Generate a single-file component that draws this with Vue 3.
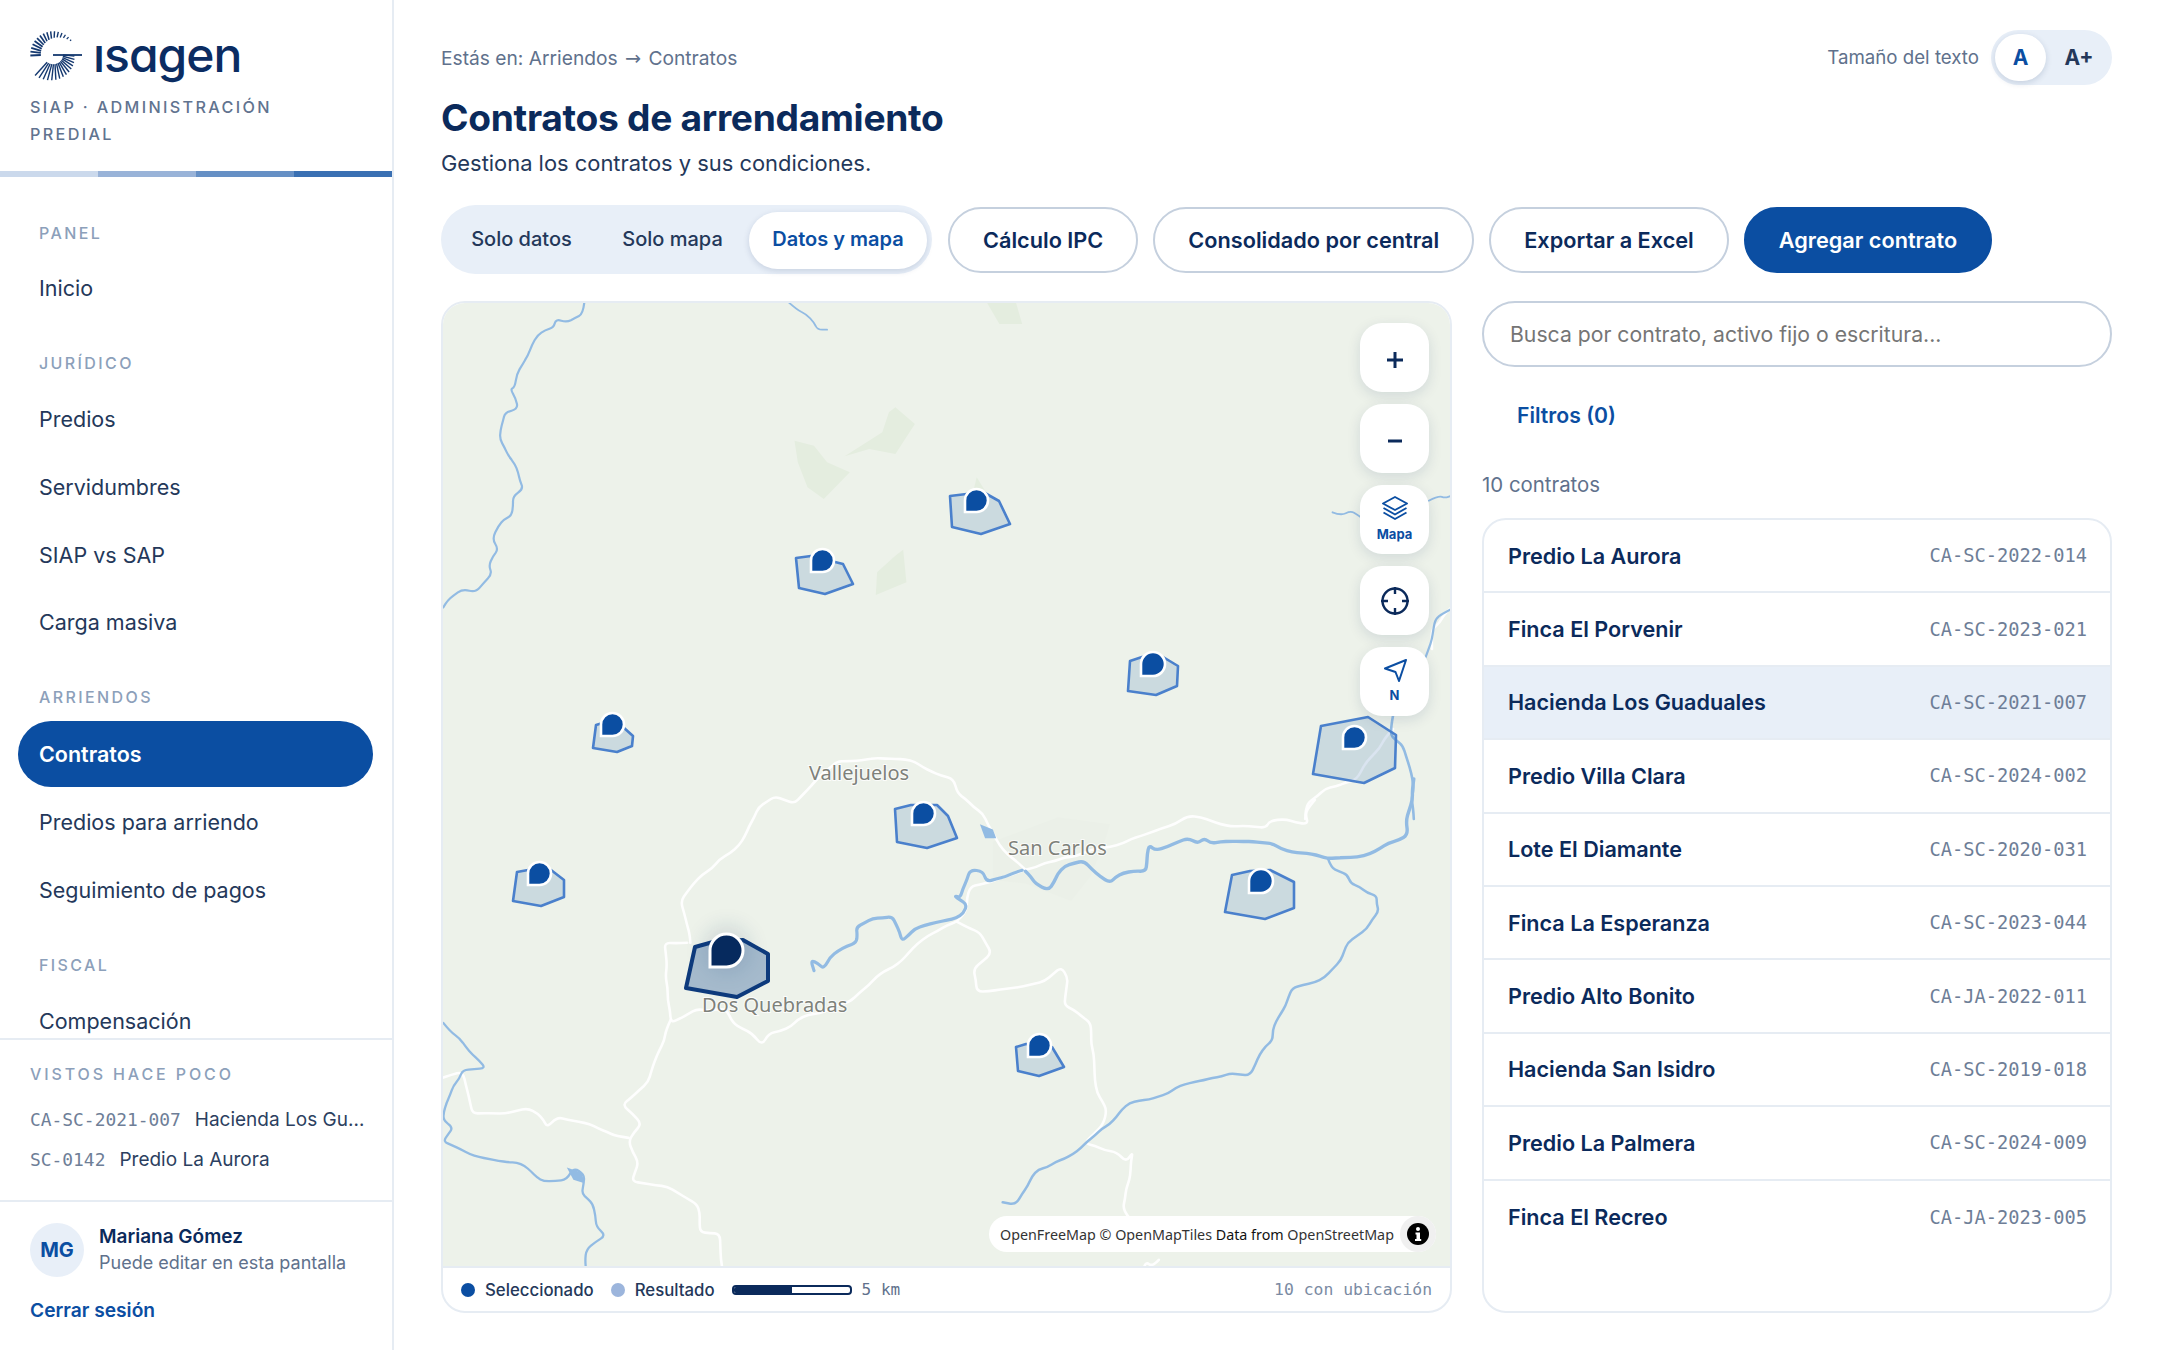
<script setup>
const SX = 1568 / 1020
const z5 = (p) => p.map(([x, y]) => [x / SX + 440, y / 3 + 300])
const z6 = (p) => p.map(([x, y]) => [x / SX + 440, y / 2.87 + 780])
const f = (n) => n.toFixed(1)
function rough(p, amp = 1.8, step = 11) {
  const out = [p[0]]
  for (let i = 0; i < p.length - 1; i++) {
    const [ax, ay] = p[i]
    const [bx, by] = p[i + 1]
    const L = Math.hypot(bx - ax, by - ay) || 1
    const n = Math.max(1, Math.round(L / step))
    for (let j = 1; j <= n; j++) {
      const t = j / n
      const r = Math.sin((i + 1) * 12.9898 + j * 78.233) * 43758.5453
      const o = j === n ? 0 : ((r - Math.floor(r)) * 2 - 1) * amp
      out.push([ax + (bx - ax) * t - ((by - ay) / L) * o, ay + (by - ay) * t + ((bx - ax) / L) * o])
    }
  }
  return out
}
function smooth(p) {
  let d = `M${f(p[0][0])} ${f(p[0][1])}`
  for (let i = 1; i < p.length - 1; i++) {
    const mx = (p[i][0] + p[i + 1][0]) / 2
    const my = (p[i][1] + p[i + 1][1]) / 2
    d += `Q${f(p[i][0])} ${f(p[i][1])} ${f(mx)} ${f(my)}`
  }
  const l = p[p.length - 1]
  return d + `L${f(l[0])} ${f(l[1])}`
}
const poly = (p) => p.map((q) => q.map(f).join(',')).join(' ')

const rivers = [
  { w: 2.2, d: z5([[222,8],[220,45],[195,70],[178,60],[175,85],[150,108],[135,170],[118,225],[115,265],[108,270],[120,330],[100,340],[92,420],[105,470],[115,495],[128,570],[112,592],[110,650],[90,680],[80,720],[90,750],[75,800],[80,825],[55,880],[35,870],[20,890],[5,925]]) },
  { w: 1.8, d: z5([[535,8],[575,70],[580,92],[595,92]]) },
  { w: 1.8, d: z5([[1372,640],[1385,650],[1400,635],[1420,660]]) },
  { w: 1.8, d: z5([[1520,605],[1535,590],[1545,597],[1555,590]]) },
  { w: 2.2, d: z5([[1555,930],[1530,960],[1525,1020],[1515,1075]]) },
  { w: 2.6, d: z5([[1465,1250],[1462,1310],[1480,1340],[1495,1440],[1497,1560]]) },
  { w: 3.4, d: z6([[1497,0],[1495,60],[1485,120],[1488,160],[1430,215],[1410,225],[1390,225],[1365,228],[1340,215],[1310,210],[1280,185],[1200,180],[1185,185],[1175,170],[1165,185],[1150,170],[1135,180],[1100,205],[1090,190],[1085,265],[1050,270],[1030,298],[990,235],[960,250],[935,320],[915,300],[900,265]]) },
  { w: 3.2, d: z6([[895,262],[870,280],[840,295],[835,265],[815,260],[810,290],[800,340],[790,335],[810,360],[805,385],[780,405],[745,420],[730,430],[710,465],[695,395],[665,400],[640,425],[640,470],[600,510],[590,545],[570,520],[575,550]]) },
  { w: 2.5, d: z6([[1365,228],[1370,255],[1395,275],[1400,300],[1440,335],[1443,380],[1425,430],[1395,470],[1385,520],[1360,570],[1310,600],[1300,650],[1280,720],[1280,750],[1260,790],[1245,850],[1215,845],[1160,870],[1090,920],[1060,930],[1030,990],[995,1040],[960,1090],[920,1120],[895,1190],[885,1222],[865,1215]]) },
  { w: 2.3, d: z6([[5,700],[40,770],[70,830],[35,835],[10,930],[5,980],[20,1000],[5,1040],[60,1085],[105,1100],[130,1110],[160,1155],[195,1150],[205,1115],[222,1135],[218,1190],[235,1220],[240,1285],[255,1310],[225,1350],[225,1415]]) },
]
const roads = [
  z5([[1555,925],[1525,990],[1525,1050]]),
  z5([[1465,1290],[1420,1400],[1410,1440],[1360,1470],[1335,1510],[1330,1560]]),
  z6([[1345,60],[1330,100],[1335,130],[1315,125],[1300,115],[1275,120],[1270,140],[1200,130],[1170,110],[1150,105],[1130,130],[1090,155],[1050,185],[1030,195],[960,225],[900,260],[860,285],[815,310],[810,375],[795,410],[750,450],[720,500],[660,590],[630,640],[600,660],[550,690],[540,710],[505,730],[495,765],[480,730],[450,700],[440,660],[395,660],[355,700],[350,600],[345,470],[380,470]]),
  z6([[355,690],[330,810],[320,870],[280,935],[310,990],[290,1040],[305,1100],[295,1155],[350,1170],[395,1220],[400,1300],[430,1305],[435,1415]]),
  z6([[290,1030],[270,1025],[230,990],[180,970],[165,1000],[150,960],[135,945],[100,960],[50,960],[40,880],[35,840],[0,860]]),
  z6([[385,470],[380,420],[370,350],[390,300],[430,230],[460,190],[490,80],[515,50],[545,70],[575,10],[585,-10],[610,-50],[670,-60],[730,-50],[770,-10],[790,0],[795,40],[820,80],[835,100],[860,190],[900,260]]),
  z6([[795,410],[830,440],[848,500],[820,545],[825,610],[880,600],[930,580],[955,540],[965,570],[960,650],[1000,700],[1005,790],[1010,900],[1025,950],[1020,990],[990,1045],[1040,1070],[1055,1100],[1065,1070],[1060,1150],[1050,1230],[1065,1270]]),
  z6([[1105,1380],[1095,1400],[1085,1385],[1080,1415]]),
].map((p) => smooth(rough(p)))
const riversD = rivers.map((r) => ({ w: r.w, d: smooth(rough(r.d, 1.7, 10)) }))

const greens = [
  z5([[840,8],[885,8],[895,75],[860,75]]),
  z5([[545,425],[575,440],[595,490],[630,520],[590,600],[565,565],[550,490]]),
  z5([[700,325],[730,375],[700,465],[660,450],[622,472],[680,400],[690,340]]),
  z5([[712,752],[717,850],[670,888],[672,820],[700,770]]),
  z5([[825,535],[838,575],[820,575]]),
].map(poly)
const town = poly(z6([[850,180],[950,110],[1030,130],[1020,190],[1000,280],[970,350],[900,300],[850,290]]))
const lake = poly(z6([[830,130],[850,145],[855,170],[838,170]]))
const lake2 = poly(z6([[195,1115],[218,1130],[222,1160],[205,1150]]))

const pin = (x, y, s) => `M${x} ${y + s}V${y + s / 2}A${s / 2} ${s / 2} 0 1 1 ${x + s / 2} ${y + s}Z`
const shift = (pts, dx) => pts.map(([x, y]) => [x + dx, y])
const markers = [
  { pts: shift([[953,497],[986,493],[1002,502],[1013,525],[984,535],[955,528]], -3), x: 965, y: 490, s: 23 },
  { pts: shift([[798,559],[813,557],[845,565],[855,585],[827,595],[801,589]], -2), x: 811, y: 550, s: 23 },
  { pts: shift([[1133,662],[1145,658],[1166,658],[1181,667],[1180,687],[1159,696],[1131,692]], -3), x: 1141, y: 653, s: 24 },
  { pts: shift([[597,726],[607,723],[624,728],[634,737],[633,747],[618,753],[594,749]], -1), x: 601, y: 714, s: 23 },
  { pts: [[1321,727],[1368,718],[1396,736],[1395,769],[1364,784],[1313,775]], x: 1343, y: 727, s: 23 },
  { pts: shift([[898,810],[914,806],[940,806],[951,817],[960,839],[930,849],[900,843]], -3), x: 912, y: 803, s: 23 },
  { pts: [[517,873],[528,871],[551,871],[564,881],[564,898],[541,907],[513,902]], x: 528, y: 863, s: 23 },
  { pts: shift([[1236,876],[1254,872],[1274,871],[1298,883],[1298,909],[1269,920],[1229,913]], -4), x: 1249, y: 870, s: 24 },
  { pts: shift([[1019,1048],[1029,1045],[1055,1048],[1067,1068],[1042,1077],[1021,1072]], -3), x: 1028, y: 1035, s: 23 },
].map((m) => ({ points: poly(m.pts), pin: pin(m.x, m.y, m.s) }))
const selected = { points: poly([[695,948],[713,943],[743,941],[768,955],[768,982],[737,998],[686,989]]), pin: pin(710, 935, 33) }

const rad = (a) => (a * Math.PI) / 180
const raysUp = Array.from({ length: 16 }, (_, i) => {
  const a = rad(183 - i * 9.6)
  const k = i / 15
  const ro = 23
  const ri = 12.5 + k * k * 9
  return { x1: 25.3 + ri * Math.cos(a), y1: 25.3 - ri * Math.sin(a), x2: 25.3 + ro * Math.cos(a), y2: 25.3 - ro * Math.sin(a), w: 1.9 - k * 0.7 }
})
const raysDown = Array.from({ length: 15 }, (_, i) => {
  const a = rad(228 + i * 9)
  const k = i / 14
  const ri = 11 - k * 2.5
  const ro = 29 - k * 9
  return { x1: 26.5 + ri * Math.cos(a), y1: 25 - ri * Math.sin(a), x2: 26.5 + ro * Math.cos(a), y2: 25 - ro * Math.sin(a), w: 1.4 }
})

const nav = [
  { label: 'PANEL', items: ['Inicio'] },
  { label: 'JURÍDICO', items: ['Predios', 'Servidumbres', 'SIAP vs SAP', 'Carga masiva'] },
  { label: 'ARRIENDOS', items: ['Contratos', 'Predios para arriendo', 'Seguimiento de pagos'] },
  { label: 'FISCAL', items: ['Compensación'] },
]
const recent = [
  { code: 'CA-SC-2021-007', name: 'Hacienda Los Guaduales' },
  { code: 'SC-0142', name: 'Predio La Aurora' },
]
const contracts = [
  ['Predio La Aurora', 'CA-SC-2022-014'],
  ['Finca El Porvenir', 'CA-SC-2023-021'],
  ['Hacienda Los Guaduales', 'CA-SC-2021-007'],
  ['Predio Villa Clara', 'CA-SC-2024-002'],
  ['Lote El Diamante', 'CA-SC-2020-031'],
  ['Finca La Esperanza', 'CA-SC-2023-044'],
  ['Predio Alto Bonito', 'CA-JA-2022-011'],
  ['Hacienda San Isidro', 'CA-SC-2019-018'],
  ['Predio La Palmera', 'CA-SC-2024-009'],
  ['Finca El Recreo', 'CA-JA-2023-005'],
]
</script>

<template>
  <div class="app">
    <aside class="side">
      <div class="brand">
        <div class="logo">
          <svg width="56" height="56" viewBox="0 0 56 56" class="logo-mark">
            <g stroke="#14386f" stroke-linecap="butt">
              <line v-for="(r, i) in raysUp" :key="'u' + i" :x1="r.x1" :y1="r.y1" :x2="r.x2" :y2="r.y2" :stroke-width="r.w" />
              <line v-for="(r, i) in raysDown" :key="'d' + i" :x1="r.x1" :y1="r.y1" :x2="r.x2" :y2="r.y2" :stroke-width="r.w" />
              <line x1="25" y1="26" x2="54" y2="26" stroke-width="1.8" />
            </g>
          </svg>
          <span class="logo-text">ısagen</span>
        </div>
        <p class="brand-sub">SIAP · ADMINISTRACIÓN PREDIAL</p>
      </div>
      <div class="stripe"><i></i><i></i><i></i><i></i></div>
      <nav class="nav">
        <section v-for="s in nav" :key="s.label" class="nav-sec">
          <h3>{{ s.label }}</h3>
          <a v-for="it in s.items" :key="it" class="nav-item" :class="{ active: it === 'Contratos' }">{{ it }}</a>
        </section>
      </nav>
      <div class="recent">
        <h4>VISTOS HACE POCO</h4>
        <div v-for="r in recent" :key="r.code" class="recent-row">
          <span class="mono">{{ r.code }}</span>
          <span class="recent-name">{{ r.name }}</span>
        </div>
      </div>
      <div class="user">
        <div class="user-top">
          <div class="avatar">MG</div>
          <div>
            <div class="user-name">Mariana Gómez</div>
            <div class="user-role">Puede editar en esta pantalla</div>
          </div>
        </div>
        <a class="logout">Cerrar sesión</a>
      </div>
    </aside>

    <main class="main">
      <header class="top">
        <div class="crumb">Estás en: Arriendos <span class="arrow">→</span> Contratos</div>
        <div class="textsize">
          <span>Tamaño del texto</span>
          <div class="ts-seg">
            <b class="on">A</b>
            <b>A+</b>
          </div>
        </div>
      </header>
      <h1>Contratos de arrendamiento</h1>
      <p class="lead">Gestiona los contratos y sus condiciones.</p>

      <div class="tools">
        <div class="seg">
          <button>Solo datos</button>
          <button>Solo mapa</button>
          <button class="on">Datos y mapa</button>
        </div>
        <button class="btn">Cálculo IPC</button>
        <button class="btn">Consolidado por central</button>
        <button class="btn">Exportar a Excel</button>
        <button class="btn primary">Agregar contrato</button>
      </div>

      <div class="work">
        <div class="mapcard">
          <div class="map">
            <svg class="mapsvg" width="1011" height="966" viewBox="441 302 1011 966">
              <defs>
                <filter id="glow" x="-60%" y="-60%" width="220%" height="220%">
                  <feGaussianBlur stdDeviation="10" />
                </filter>
              </defs>
              <polygon :points="town" fill="#ebf0e8" />
              <polygon v-for="(g, i) in greens" :key="i" :points="g" fill="#e4eddf" />
              <path v-for="(d, i) in roads" :key="'r' + i" :d="d" fill="none" stroke="#fff" stroke-opacity="0.92" stroke-width="2.6" stroke-linejoin="round" stroke-linecap="round" />
              <path v-for="(r, i) in riversD" :key="'b' + i" :d="r.d" fill="none" stroke="#92bbe3" :stroke-width="r.w" stroke-linejoin="round" stroke-linecap="round" />
              <polygon :points="lake" fill="#92bbe3" />
              <polygon :points="lake2" fill="#92bbe3" />
              <g class="places">
                <text x="809" y="781">Vallejuelos</text>
                <text x="1008" y="856">San Carlos</text>
                <text x="702" y="1013">Dos Quebradas</text>
              </g>
              <g v-for="(m, i) in markers" :key="'m' + i">
                <polygon :points="m.points" fill="#0b4ea2" fill-opacity="0.15" stroke="#4a80cc" stroke-width="2.6" stroke-linejoin="round" />
                <path :d="m.pin" fill="#0b4ea2" stroke="#fff" stroke-width="2.6" />
              </g>
              <circle cx="727" cy="950" r="24" fill="#0b2a5b" opacity="0.12" filter="url(#glow)" />
              <polygon :points="selected.points" fill="#134a8e" fill-opacity="0.33" stroke="#0d3a7c" stroke-width="4" stroke-linejoin="round" />
              <path :d="selected.pin" fill="#062a5e" stroke="#fff" stroke-width="3" />
            </svg>
            <div class="ctrls">
              <div class="ctrl pad">
                <svg width="20" height="20" viewBox="0 0 20 20"><path d="M10 2v16M2 10h16" stroke="#0b2a5b" stroke-width="3" /></svg>
              </div>
              <div class="ctrl pad">
                <svg width="20" height="20" viewBox="0 0 20 20"><path d="M3 10h14" stroke="#0b2a5b" stroke-width="3" /></svg>
              </div>
              <div class="ctrl labelled">
                <svg width="26" height="26" viewBox="0 0 26 26" fill="none" stroke="#0b4ea2" stroke-width="1.9" stroke-linejoin="round"><path d="M13 2 25 8.5 13 15 1 8.5Z" /><path d="M1.5 13 13 19.5 24.5 13" /><path d="M1.5 17.5 13 24 24.5 17.5" /></svg>
                <span>Mapa</span>
              </div>
              <div class="ctrl">
                <svg width="30" height="30" viewBox="0 0 30 30" fill="none" stroke="#0b2a5b" stroke-width="2.4"><circle cx="15" cy="15" r="12.5" /><path d="M15 1v7M15 22v7M1 15h7M22 15h7" /></svg>
              </div>
              <div class="ctrl labelled">
                <svg width="24" height="24" viewBox="0 0 24 24" fill="none" stroke="#0b4ea2" stroke-width="2" stroke-linejoin="round"><path d="M23 2 2 10.5l10.5 3.5 3.5 9Z" /></svg>
                <span>N</span>
              </div>
            </div>
            <div class="attrib">
              <span class="attrib-t">OpenFreeMap © OpenMapTiles <em>Data from</em> OpenStreetMap</span>
              <span class="attrib-i">
                <svg width="24" height="24" viewBox="0 0 24 24"><circle cx="12" cy="12" r="11" fill="#000" /><circle cx="12" cy="7" r="2" fill="#fff" /><path d="M9.5 10.5H14V17h1.2v2H9v-2h1.5v-4.5h-1Z" fill="#fff" /></svg>
              </span>
            </div>
          </div>
          <div class="legend">
            <span class="dot sel"></span><span class="lg">Seleccionado</span>
            <span class="dot res"></span><span class="lg">Resultado</span>
            <span class="scale"><i></i></span>
            <span class="mono km">5 km</span>
            <span class="mono count">10 con ubicación</span>
          </div>
        </div>

        <div class="panel">
          <input class="search" type="text" placeholder="Busca por contrato, activo fijo o escritura..." />
          <a class="filters">Filtros (0)</a>
          <div class="total">10 contratos</div>
          <div class="list">
            <div v-for="c in contracts" :key="c[1]" class="row" :class="{ sel: c[1] === 'CA-SC-2021-007' }">
              <span class="row-name">{{ c[0] }}</span>
              <span class="mono row-code">{{ c[1] }}</span>
            </div>
          </div>
        </div>
      </div>
    </main>
  </div>
</template>

<style>
html, body { margin: 0; height: 100%; overflow: hidden; background: #fff; }
</style>

<style scoped>
* { box-sizing: border-box; }
.app {
  display: flex;
  width: 2160px;
  height: 1350px;
  font-family: Inter, "Noto Sans", sans-serif;
  color: #0b2a5b;
  background: #fff;
  overflow: hidden;
}
.mono { font-family: "DejaVu Sans Mono", monospace; }

/* sidebar */
.side {
  width: 394px;
  flex: none;
  display: flex;
  flex-direction: column;
  border-right: 2px solid #e6ecf3;
  height: 1350px;
}
.brand { height: 171px; padding: 29px 30px 0; }
.logo { display: flex; align-items: center; height: 56px; gap: 9px; margin-left: -2px; }
.logo-mark { flex: none; }
.logo-text {
  font-size: 48px;
  font-weight: 500;
  color: #0b2c62;
  letter-spacing: -1px;
  line-height: 1;
  font-feature-settings: "cv11" 1;
  margin-top: -4px;
}
.brand-sub {
  margin: 9px 0 0;
  font-size: 16.2px;
  line-height: 27px;
  font-weight: 500;
  letter-spacing: 0.145em;
  color: #61738f;
  width: 300px;
}
.stripe { display: flex; height: 6px; flex: none; }
.stripe i { flex: 1; }
.stripe i:nth-child(1) { background: #cbd9ec; }
.stripe i:nth-child(2) { background: #99b3d8; }
.stripe i:nth-child(3) { background: #6690c5; }
.stripe i:nth-child(4) { background: #3a70b3; }
.nav {
  flex: 1;
  min-height: 0;
  overflow: hidden;
  padding: 44px 19px 0 18px;
  display: flex;
  flex-direction: column;
  gap: 30px;
}
.nav-sec { display: flex; flex-direction: column; gap: 1.7px; }
.nav-sec h3 {
  margin: 0 0 10px;
  height: 24px;
  padding-left: 21px;
  font-size: 16px;
  line-height: 24px;
  font-weight: 500;
  letter-spacing: 0.15em;
  color: #8ca0ba;
}
.nav-sec:first-child h3 { margin-bottom: 8px; }
.nav-item {
  height: 66px;
  flex: none;
  display: flex;
  align-items: center;
  padding-left: 21px;
  font-size: 21.5px;
  color: #24385a;
  border-radius: 33px;
}
.nav-item.active { background: #0b4ea2; color: #fff; font-weight: 600; }
.recent { flex: none; height: 162px; border-top: 2px solid #e6ecf3; padding: 22px 24px 0 30px; }
.recent h4 {
  margin: 0 0 13px;
  font-size: 16px;
  line-height: 24px;
  font-weight: 500;
  letter-spacing: 0.18em;
  color: #8ca0ba;
}
.recent-row { display: flex; gap: 14px; height: 40px; align-items: center; font-size: 19px; }
.recent-row .mono { font-size: 17.9px; color: #6e7e97; flex: none; }
.recent-name { color: #2c3f60; white-space: nowrap; overflow: hidden; text-overflow: ellipsis; padding-right: 1px; }
.user { flex: none; height: 150px; border-top: 2px solid #e6ecf3; padding: 21px 30px 0; }
.user-top { display: flex; gap: 15px; align-items: center; }
.avatar {
  width: 54px; height: 54px; flex: none; border-radius: 50%;
  background: #e8eff8; color: #0b4ea2; font-size: 20px; font-weight: 700;
  display: flex; align-items: center; justify-content: center;
}
.user-name { font-size: 19px; font-weight: 600; line-height: 26px; color: #0b2a5b; }
.user-role { font-size: 18px; line-height: 26px; color: #60718c; }
.logout { display: block; margin-top: 21px; font-size: 19.2px; font-weight: 600; color: #0b4ea2; }

/* main */
.main { flex: 1; min-width: 0; padding: 0 48px 37px 47px; display: flex; flex-direction: column; }
.top { display: flex; justify-content: space-between; align-items: center; height: 55px; margin-top: 30px; }
.crumb { font-size: 19.2px; color: #60718c; padding-top: 1px; }
.arrow { font-family: "DejaVu Sans", sans-serif; margin: 0 2px; }
.textsize { display: flex; align-items: center; gap: 12px; font-size: 18.7px; color: #60718c; }
.ts-seg {
  display: flex; width: 121px; height: 55px; padding: 4px;
  border-radius: 28px; background: #e8eff8;
}
.ts-seg b {
  flex: 1; display: flex; align-items: center; justify-content: center;
  font-size: 21px; font-weight: 700; color: #24385a; border-radius: 24px; padding-left: 4px;
}
.ts-seg b.on {
  flex: none; width: 51px; background: #fff; color: #0b4ea2; padding-left: 0;
  box-shadow: 0 2px 6px rgba(11, 42, 91, 0.16);
}
h1 { margin: 0; height: 46px; margin-top: 10px; font-size: 37.2px; line-height: 46px; font-weight: 700; color: #0b2a5b; letter-spacing: -0.3px; }
.lead { margin: 0; height: 30px; margin-top: 7px; font-size: 21.9px; line-height: 30px; color: #24385a; }
.tools { display: flex; align-items: center; gap: 15px; margin-top: 27px; height: 69px; }
.seg {
  display: flex; align-items: center; width: 491px; height: 69px; padding: 7px 5px 5px;
  background: #e8eff8; border-radius: 35px; flex: none; margin-right: 1px;
}
.seg button {
  flex: none; height: 57px; width: 151px; padding: 0 0 3px; border: 0; background: none; border-radius: 29px;
  font: inherit; font-size: 20px; font-weight: 500; color: #24385a;
}
.seg button.on {
  width: 178px; margin-left: 1px; background: #fff; color: #0b4ea2; font-weight: 600;
  box-shadow: 0 2px 6px rgba(11, 42, 91, 0.15);
}
.btn {
  height: 66px; padding: 0 33px; flex: none; border: 2px solid #c5d0de; border-radius: 33px;
  background: #fff; font: inherit; font-size: 21.7px; font-weight: 600; color: #0b2a5b;
}
.btn.primary { background: #0b4ea2; border-color: #0b4ea2; color: #fff; }
.work { flex: 1; min-height: 0; display: flex; gap: 30px; margin-top: 27px; }
.mapcard {
  width: 1011px; flex: none; display: flex; flex-direction: column;
  border: 2px solid #e6ecf3; border-radius: 24px; overflow: hidden; background: #fff;
}
.map { position: relative; flex: 1; min-height: 0; background: #edf2ea; overflow: hidden; }
.mapsvg { display: block; position: absolute; left: -2px; top: -2px; }
.places text {
  font-family: "Noto Sans", sans-serif; font-size: 20px; fill: #7e817a;
  stroke: #fff; stroke-width: 2px; stroke-opacity: 0.8; paint-order: stroke;
}
.ctrls { position: absolute; top: 20px; right: 21px; display: flex; flex-direction: column; gap: 12px; }
.ctrl {
  width: 69px; height: 69px; border-radius: 22px; background: #fff;
  display: flex; flex-direction: column; align-items: center; justify-content: center;
  box-shadow: 0 4px 14px rgba(11, 42, 91, 0.12);
}
.ctrl.pad { padding-top: 4px; }
.ctrl.labelled { gap: 5.5px; padding-bottom: 2.5px; }
.ctrl span { font-size: 13px; line-height: 15px; font-weight: 700; color: #0b4ea2; }
.attrib {
  position: absolute; right: 14px; bottom: 14px; width: 447px; height: 36px;
  display: flex; align-items: center; justify-content: space-between;
  background: #fff; border-radius: 18px; padding-left: 11px;
  font-family: "Noto Sans", sans-serif; font-size: 14.3px; color: #333;
  white-space: nowrap;
}
.attrib-t em { font-style: normal; color: #111; }
.attrib-i {
  width: 36px; height: 36px; border-radius: 50%; background: #f0f0f0;
  display: flex; align-items: center; justify-content: center;
}
.legend {
  flex: none; height: 45px; display: flex; align-items: center; padding: 0 18px 0 18px;
  font-size: 16.8px; font-weight: 500; color: #24385a; border-top: 2px solid #e6ecf3;
}
.dot { width: 14px; height: 14px; border-radius: 50%; flex: none; margin-right: 10px; }
.dot.sel { background: #0b4ea2; }
.dot.res { background: #9cb5dc; margin-left: 17px; }
.scale {
  width: 120px; height: 10px; margin-left: 17px; border: 2px solid #0b2a5b; border-radius: 4px;
  display: block; flex: none; overflow: hidden;
}
.scale i { display: block; width: 50%; height: 100%; background: #0b2a5b; }
.km { margin-left: 10px; font-size: 16px; font-weight: 400; color: #60718c; }
.count { margin-left: auto; font-size: 16.4px; font-weight: 400; color: #7b8ba3; }

/* right */
.panel { flex: 1; min-width: 0; display: flex; flex-direction: column; }
.search {
  height: 66px; flex: none; width: 100%; border: 2px solid #c5d0de; border-radius: 33px;
  padding: 0 26px; font: inherit; font-size: 21.2px; color: #24385a; outline: none; background: #fff;
}
.search::placeholder { color: #757575; opacity: 1; }
.filters { margin: 33px 0 0 35px; height: 30px; line-height: 30px; font-size: 21.2px; font-weight: 600; color: #0b4ea2; }
.total { margin-top: 41px; height: 28px; line-height: 28px; font-size: 20.4px; color: #60718c; }
.list {
  flex: 1; min-height: 0; margin-top: 19px;
  border: 2px solid #e6ecf3; border-radius: 24px; overflow: hidden;
}
.row {
  height: 73.4px; display: flex; align-items: center; justify-content: space-between;
  padding: 0 23px 0 24px; border-bottom: 2px solid #e6ecf3;
}
.row:last-child { border-bottom: 0; }
.row.sel { background: #e8eff8; }
.row-name { font-size: 21.6px; font-weight: 600; color: #0b2a5b; }
.row-code { font-size: 18.7px; color: #6e7e97; }
</style>
